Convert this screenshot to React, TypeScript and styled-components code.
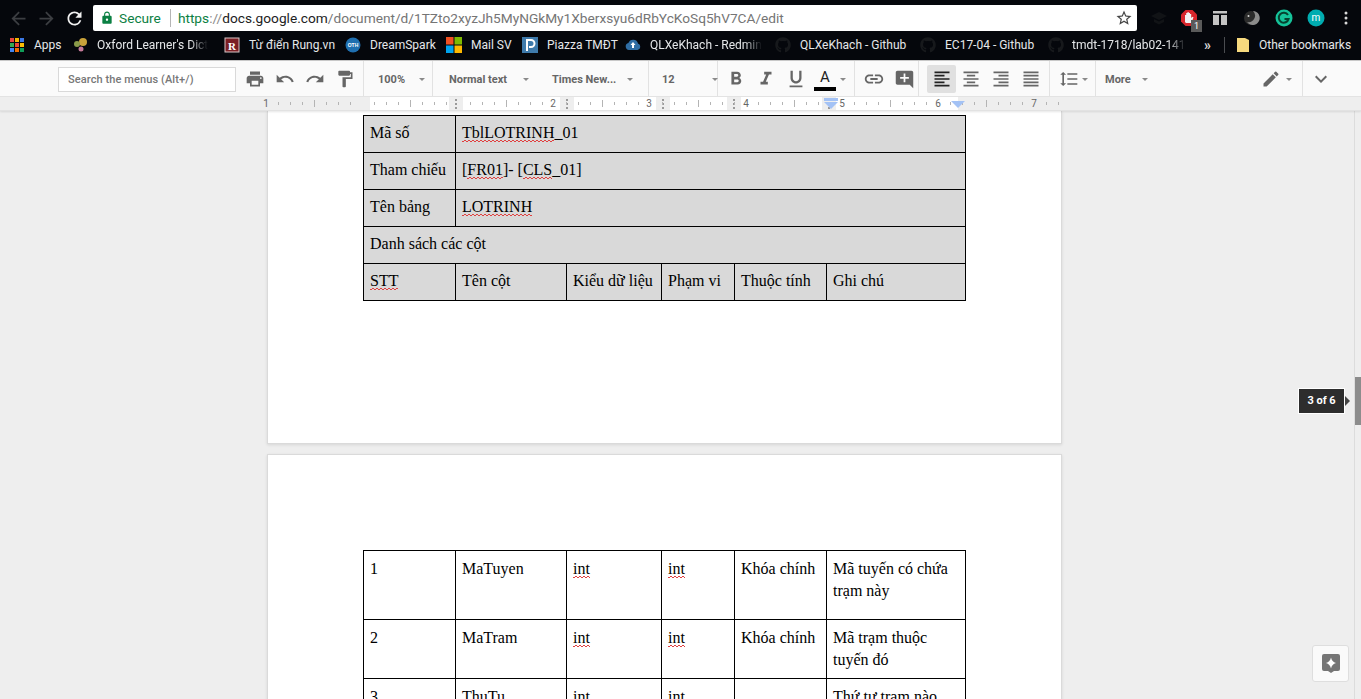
import React from "react";
import styled, { createGlobalStyle } from "styled-components";
import {
  MdAddComment,
  MdArrowBack,
  MdArrowForward,
  MdEdit,
  MdExpandMore,
  MdFormatAlignCenter,
  MdFormatAlignJustify,
  MdFormatAlignLeft,
  MdFormatAlignRight,
  MdFormatBold,
  MdFormatItalic,
  MdFormatLineSpacing,
  MdFormatPaint,
  MdFormatUnderlined,
  MdInsertLink,
  MdLock,
  MdPrint,
  MdRedo,
  MdRefresh,
  MdStarBorder,
  MdUndo,
} from "react-icons/md";
import { FaGithub } from "react-icons/fa";

const GlobalStyle = createGlobalStyle`
  html, body {
    margin: 0;
    padding: 0;
    height: 100%;
    overflow: hidden;
    background: #eeeeee;
  }
  * { box-sizing: border-box; }
`;

const Shell = styled.div`
  width: 1361px;
  height: 699px;
  display: flex;
  flex-direction: column;
  overflow: hidden;
  font-family: Roboto, "Liberation Sans", sans-serif;
`;

/* browser chrome */
const TopBar = styled.div`
  height: 32px;
  flex: none;
  background: #05070c;
  display: flex;
  align-items: flex-start;
  padding: 5px 0 0 4px;
`;

const NavButton = styled.div<{ $dim?: boolean; $w?: number }>`
  width: ${(p) => p.$w ?? 28}px;
  height: 26px;
  flex: none;
  display: flex;
  align-items: center;
  justify-content: center;
  color: ${(p) => (p.$dim ? "#3c3e42" : "#f0f0f0")};
  font-size: 21px;
`;

const AddressBar = styled.div`
  width: 1044px;
  height: 26px;
  flex: none;
  margin-left: 5px;
  background: #ffffff;
  border-radius: 2px;
  display: flex;
  align-items: center;
  padding-left: 7px;
  font-size: 13.7px;
  white-space: nowrap;
`;

const SecureLabel = styled.span`
  color: #0b8043;
  margin-left: 5px;
  padding-right: 9px;
  border-right: 1px solid #b5b5b5;
  line-height: 18px;
  margin-right: 7px;
`;

const UrlPart = styled.span<{ $c: string }>`
  color: ${(p) => p.$c};
`;

const StarSlot = styled.div`
  margin-left: auto;
  margin-right: 4px;
  display: flex;
  color: #444;
  font-size: 18px;
`;

const Extensions = styled.div`
  display: flex;
  align-items: center;
  height: 26px;
  flex: none;
  margin-left: 7px;
`;

const ExtSlot = styled.div<{ $w: number }>`
  width: ${(p) => p.$w}px;
  height: 26px;
  display: flex;
  align-items: center;
  justify-content: center;
  position: relative;
`;

const ExtBadge = styled.span`
  position: absolute;
  left: 17px;
  top: 15px;
  width: 11px;
  height: 12px;
  background: #5a5a5a;
  color: #fff;
  font-size: 9px;
  line-height: 12px;
  text-align: center;
`;

const BookmarkBar = styled.div`
  height: 28px;
  flex: none;
  background: #05070c;
  display: flex;
  align-items: center;
  padding: 0 0 2px 10px;
`;

const Bookmark = styled.div<{ $w: number; $gap?: number }>`
  width: ${(p) => p.$w}px;
  flex: none;
  display: flex;
  align-items: center;
  gap: ${(p) => p.$gap ?? 9}px;
  color: #e6e8ea;
  font-size: 12px;
  white-space: nowrap;
  overflow: hidden;
  svg {
    flex: none;
  }
`;

const BookmarkText = styled.span<{ $fade?: boolean }>`
  ${(p) =>
    p.$fade
      ? "-webkit-mask-image: linear-gradient(to right, #000 84%, transparent 100%); mask-image: linear-gradient(to right, #000 84%, transparent 100%);"
      : ""}
`;

const Chevrons = styled.span`
  width: 20px;
  margin-left: 9px;
  color: #d8d8d8;
  font-size: 14px;
  font-weight: 700;
`;

const BarDivider = styled.span`
  width: 1px;
  height: 16px;
  background: #4a4c50;
  margin: 0 11px 0 0;
`;

/* docs toolbar */
const Toolbar = styled.div`
  height: 37px;
  flex: none;
  background: #fafafa;
  border-top: 1px solid #c8c8c8;
  border-bottom: 1px solid #e4e4e4;
  display: flex;
  align-items: stretch;
  padding-left: 58px;
  color: #666666;
`;

const SearchBox = styled.div`
  width: 178px;
  height: 25px;
  flex: none;
  margin-top: 1px;
  border: 1px solid #d9d9d9;
  background: #fff;
  color: #777;
  font-size: 11px;
  font-weight: 500;
  line-height: 24px;
  padding-left: 9px;
  letter-spacing: 0.1px;
  white-space: nowrap;
`;

const Group = styled.div<{ $w: number; $line?: boolean; $pad?: number }>`
  width: ${(p) => p.$w}px;
  flex: none;
  display: flex;
  align-items: center;
  padding: 1px 0 0 ${(p) => p.$pad ?? 0}px;
  border-right: ${(p) => (p.$line === false ? "none" : "1px solid #e2e2e2")};
`;

const IconButton = styled.div<{ $w?: number; $on?: boolean; $size?: number; $c?: string }>`
  width: ${(p) => p.$w ?? 30}px;
  height: 28px;
  flex: none;
  display: flex;
  align-items: center;
  justify-content: center;
  border-radius: 2px;
  font-size: ${(p) => p.$size ?? 20}px;
  color: ${(p) => p.$c ?? "#666666"};
  background: ${(p) => (p.$on ? "#e0e0e0" : "transparent")};
`;

const Label = styled.span<{ $w?: number }>`
  width: ${(p) => (p.$w ? `${p.$w}px` : "auto")};
  flex: none;
  font-size: 11px;
  font-weight: 700;
  color: #666666;
  white-space: nowrap;
`;

const Caret = styled.span<{ $gap?: number; $after?: number }>`
  width: 0;
  height: 0;
  flex: none;
  margin-left: ${(p) => p.$gap ?? 0}px;
  margin-right: ${(p) => p.$after ?? 0}px;
  border-left: 3px solid transparent;
  border-right: 3px solid transparent;
  border-top: 3px solid #8a8a8a;
`;

const Spacer = styled.span<{ $w?: number }>`
  flex: ${(p) => (p.$w ? "none" : "1")};
  width: ${(p) => p.$w ?? 0}px;
`;

const ColorA = styled.div`
  width: 24px;
  height: 24px;
  display: flex;
  flex-direction: column;
  align-items: center;
  color: #222;
  font-size: 15px;
  line-height: 20px;
  font-weight: 400;
`;

const ColorSwatch = styled.span`
  width: 22px;
  height: 4px;
  background: #000;
  flex: none;
`;

/* ruler */
const Ruler = styled.div`
  height: 14px;
  flex: none;
  position: relative;
  display: flex;
  background: #eeeeee;
  border-bottom: 1px solid #e2e2e2;
  box-shadow: 0 1px 2px rgba(0, 0, 0, 0.1);
  z-index: 2;
`;

const RulerSeg = styled.div<{ $w: number; $white?: boolean; $handle?: boolean }>`
  width: ${(p) => p.$w}px;
  flex: none;
  background: ${(p) => (p.$white ? "#ffffff" : "#eeeeee")};
  display: flex;
  align-items: center;
  justify-content: center;
  &::after {
    content: ${(p) => (p.$handle ? '""' : "none")};
    width: 2px;
    height: 10px;
    background: repeating-linear-gradient(to bottom, #9a9a9a 0 2px, transparent 2px 4px);
  }
`;

const RulerTicks = styled.svg`
  position: absolute;
  left: 0;
  top: 0;
`;

const RulerNumber = styled.span<{ $x: number }>`
  position: absolute;
  left: ${(p) => p.$x}px;
  top: 0;
  width: 10px;
  text-align: center;
  font-size: 10px;
  line-height: 14px;
  color: #666;
`;

/* document */
const Workspace = styled.div`
  flex: 1;
  min-height: 0;
  display: flex;
  position: relative;
  background: #eeeeee;
`;

const Pages = styled.div`
  flex: 1;
  min-width: 0;
  overflow: hidden;
  padding-left: 267px;
  display: flex;
  flex-direction: column;
  gap: 10px;
`;

const Page = styled.div<{ $h: number; $top: number }>`
  width: 795px;
  height: ${(p) => p.$h}px;
  flex: none;
  background: #fff;
  padding: ${(p) => p.$top}px 0 0 95px;
  border: 1px solid #dadada;
  border-top: ${(p) => (p.$top < 10 ? "none" : "1px solid #dadada")};
  box-shadow: 0 1px 3px rgba(0, 0, 0, 0.1);
`;

const DocTable = styled.table`
  width: 602px;
  border-collapse: collapse;
  table-layout: fixed;
  font-family: "Liberation Serif", "Times New Roman", serif;
  font-size: 16px;
  line-height: 22px;
  color: #000;
`;

const Cell = styled.td<{ $shade?: boolean; $tall?: number }>`
  border: 1px solid #000;
  padding: ${(p) => (p.$tall ? 7 : 6)}px 6px 6px;
  vertical-align: top;
  height: ${(p) => p.$tall ?? 37}px;
  background: ${(p) => (p.$shade ? "#d9d9d9" : "#ffffff")};
  overflow: hidden;
  white-space: normal;
`;

const Squiggle = styled.span`
  padding-bottom: 1px;
  background-image: linear-gradient(135deg, transparent 35%, #e04040 35% 65%, transparent 65%),
    linear-gradient(45deg, transparent 35%, #e04040 35% 65%, transparent 65%);
  background-size: 4px 2px, 4px 2px;
  background-position: 0 100%, 2px 100%;
  background-repeat: repeat-x;
`;

const Scrollbar = styled.div`
  width: 7px;
  flex: none;
  background: #eeeeee;
  border-left: 1px solid #dcdcdc;
  padding-top: 266px;
`;

const ScrollThumb = styled.div`
  height: 48px;
  background: #8c8c8c;
`;

const PageTip = styled.div`
  position: absolute;
  left: 1298px;
  top: 277px;
  width: 47px;
  height: 26px;
  background: #2d2d2d;
  border: 1px solid #fff;
  color: #fff;
  font-size: 11px;
  font-weight: 700;
  line-height: 24px;
  text-align: center;
  &::after {
    content: "";
    position: absolute;
    left: 46px;
    top: 7px;
    border-top: 5px solid transparent;
    border-bottom: 5px solid transparent;
    border-left: 5px solid #444444;
  }
`;

const ExploreButton = styled.div`
  position: absolute;
  left: 1312px;
  top: 534px;
  width: 37px;
  height: 37px;
  background: #fafafa;
  border: 1px solid #dedede;
  border-radius: 3px;
  display: flex;
  align-items: center;
  justify-content: center;
`;

const rulerSegments = [
  { w: 370 },
  { w: 79, white: true },
  { w: 14, handle: true },
  { w: 97, white: true },
  { w: 14, handle: true },
  { w: 82, white: true },
  { w: 14, handle: true },
  { w: 57, white: true },
  { w: 14, handle: true },
  { w: 81, white: true },
  { w: 14, handle: true },
  { w: 122, white: true },
  { w: 403 },
];

const rulerNumbers = [
  { n: 1, x: 261 },
  { n: 2, x: 548 },
  { n: 3, x: 644 },
  { n: 4, x: 741 },
  { n: 5, x: 837 },
  { n: 6, x: 933 },
  { n: 7, x: 1029 },
];

const AppsIcon = () => {
  const colors = ["#e8453c", "#f4b400", "#3b78e7", "#34a853", "#ea4335", "#fbbc05", "#4285f4", "#ef6c00", "#0f9d58"];
  return (
    <svg width="14" height="14" viewBox="0 0 14 14">
      {colors.map((c, i) => (
        <rect key={i} x={(i % 3) * 5} y={Math.floor(i / 3) * 5} width="4" height="4" fill={c} />
      ))}
    </svg>
  );
};

const OxfordIcon = () => (
  <svg width="16" height="16" viewBox="0 0 16 16">
    <circle cx="10" cy="5" r="4" fill="#c9a23a" />
    <circle cx="4" cy="7" r="3" fill="#8a9a4a" />
    <circle cx="8" cy="12" r="2.5" fill="#c77a9a" />
  </svg>
);

const RungIcon = () => (
  <svg width="16" height="16" viewBox="0 0 16 16">
    <rect x="1" y="1" width="14" height="14" fill="#7b1f24" stroke="#d8c8c8" />
    <text x="8" y="12.500" fontSize="11" fontWeight="700" fill="#fff" textAnchor="middle" fontFamily="Liberation Serif">R</text>
  </svg>
);

const OthIcon = () => (
  <svg width="16" height="16" viewBox="0 0 16 16">
    <circle cx="8" cy="8" r="7.500" fill="#1f6fb0" />
    <text x="8" y="10" fontSize="5" fontWeight="700" fill="#fff" textAnchor="middle" fontFamily="Liberation Sans">OTH</text>
  </svg>
);

const WindowsIcon = () => (
  <svg width="16" height="16" viewBox="0 0 16 16">
    <rect width="7.500" height="7.500" fill="#f25022" />
    <rect x="8.500" width="7.500" height="7.500" fill="#7fba00" />
    <rect y="8.500" width="7.500" height="7.500" fill="#00a4ef" />
    <rect x="8.500" y="8.500" width="7.500" height="7.500" fill="#ffb900" />
  </svg>
);

const PiazzaIcon = () => (
  <svg width="16" height="16" viewBox="0 0 16 16">
    <rect width="16" height="16" fill="#3e7aab" />
    <path d="M5 14V3h4a3.500 3.500 0 0 1 0 7H7" fill="none" stroke="#fff" strokeWidth="2" />
  </svg>
);

const CloudIcon = () => (
  <svg width="16" height="16" viewBox="0 0 16 16">
    <path d="M4 13a3.500 3.500 0 0 1-.6-6.900A5 5 0 0 1 13 6.600 3.300 3.300 0 0 1 12.500 13z" fill="#2f6da4" />
    <path d="M8 5l2.500 3H9v3H7V8H5.500z" fill="#fff" />
  </svg>
);

const GithubIcon = () => <FaGithub size={16} color="#17191c" />;

const FolderIcon = () => (
  <svg width="14" height="16" viewBox="0 0 14 16">
    <path d="M1 1h8l4 2v12H1z" fill="#f6d97e" />
  </svg>
);

const CapIcon = () => (
  <svg width="18" height="16" viewBox="0 0 18 16">
    <path d="M9 2L1 6l8 4 8-4zM4 9v3l5 2.500 5-2.500V9l-5 2.500z" fill="#111316" />
  </svg>
);

const StopIcon = () => (
  <svg width="18" height="18" viewBox="0 0 18 18">
    <path d="M5.500 1h7L17 5.500v7L12.500 17h-7L1 12.500v-7z" fill="#d8262c" />
    <path d="M5 13V6h1.200V4H7.500V3h1.200v1H10v1h1.200v4l1.300-1.300 1 .6L11.500 14H6z" fill="#f2f2f2" />
  </svg>
);

const ReaderIcon = () => (
  <svg width="16" height="16" viewBox="0 0 16 16">
    <rect x="1" y="1" width="14" height="2.500" fill="#c4c4c4" />
    <rect x="1" y="5" width="6" height="10" fill="#c4c4c4" />
    <rect x="9" y="5" width="6" height="10" fill="#c4c4c4" />
  </svg>
);

const MoonIcon = () => (
  <svg width="18" height="18" viewBox="0 0 18 18">
    <circle cx="8" cy="9" r="7" fill="#2c2c2c" />
    <path d="M10 2a7 7 0 1 1-6 11 6.500 6.500 0 0 0 6-11z" fill="#8c8c8c" />
    <circle cx="5.500" cy="7" r="1" fill="#d8d8d8" />
  </svg>
);

const GrammarlyIcon = () => (
  <svg width="18" height="18" viewBox="0 0 18 18">
    <circle cx="9" cy="9" r="8.500" fill="#15c39a" />
    <path d="M13 6a5 5 0 1 0 .6 4H9.500" fill="none" stroke="#06402f" strokeWidth="2" />
  </svg>
);

const AvatarIcon = () => (
  <svg width="18" height="18" viewBox="0 0 18 18">
    <circle cx="9" cy="9" r="8.500" fill="#00acb0" />
    <text x="9" y="12" fontSize="10" fill="#fff" textAnchor="middle" fontFamily="Roboto">m</text>
  </svg>
);

const MenuDots = () => (
  <svg width="4" height="14" viewBox="0 0 4 14">
    <circle cx="2" cy="2" r="1.500" fill="#d8d8d8" />
    <circle cx="2" cy="7" r="1.500" fill="#d8d8d8" />
    <circle cx="2" cy="12" r="1.500" fill="#d8d8d8" />
  </svg>
);

const ExploreIcon = () => (
  <svg width="18" height="19" viewBox="0 0 18 19">
    <path d="M2 0h14a2 2 0 0 1 2 2v13a2 2 0 0 1-2 2h-4l-3 2-3-2H2a2 2 0 0 1-2-2V2a2 2 0 0 1 2-2z" fill="#757575" />
    <path d="M9 3.500c.6 3 2.300 4.700 5 5.500-2.700.8-4.400 2.500-5 5.500-.6-3-2.300-4.700-5-5.500 2.700-.8 4.400-2.500 5-5.500z" fill="#fff" />
  </svg>
);

const ticks = () => {
  const out: React.ReactNode[] = [];
  for (let x = 278; x < 1062; x += 12) {
    const step = Math.round((x - 278) / 12) % 8;
    if (step === 7) continue;
    const tall = step === 3;
    out.push(<rect key={x} x={x} y={tall ? 3 : 5} width="1" height={tall ? 7 : 3} fill="#b4b4b4" />);
  }
  return out;
};

const Columns = () => (
  <colgroup>
    <col width="92" />
    <col width="111" />
    <col width="95" />
    <col width="73" />
    <col width="92" />
    <col width="139" />
  </colgroup>
);

export default function App() {
  return (
    <Shell>
      <GlobalStyle />
      <TopBar>
        <NavButton $dim><MdArrowBack /></NavButton>
        <NavButton $dim><MdArrowForward /></NavButton>
        <NavButton><MdRefresh /></NavButton>
        <AddressBar>
          <MdLock size={14} color="#0b8043" />
          <SecureLabel>Secure</SecureLabel>
          <UrlPart $c="#0b8043">https</UrlPart>
          <UrlPart $c="#8a8a8a">://</UrlPart>
          <UrlPart $c="#222222">docs.google.com</UrlPart>
          <UrlPart $c="#757575">/document/d/1TZto2xyzJh5MyNGkMy1Xberxsyu6dRbYcKoSq5hV7CA/edit</UrlPart>
          <StarSlot><MdStarBorder /></StarSlot>
        </AddressBar>
        <Extensions>
          <ExtSlot $w={30}><CapIcon /></ExtSlot>
          <ExtSlot $w={30}><StopIcon /><ExtBadge>1</ExtBadge></ExtSlot>
          <ExtSlot $w={32}><ReaderIcon /></ExtSlot>
          <ExtSlot $w={31}><MoonIcon /></ExtSlot>
          <ExtSlot $w={33}><GrammarlyIcon /></ExtSlot>
          <ExtSlot $w={31}><AvatarIcon /></ExtSlot>
          <ExtSlot $w={30}><MenuDots /></ExtSlot>
        </Extensions>
      </TopBar>

      <BookmarkBar>
        <Bookmark $w={63} $gap={10}><AppsIcon /><BookmarkText>Apps</BookmarkText></Bookmark>
        <Bookmark $w={151} $gap={8}><OxfordIcon /><BookmarkText $fade>Oxford Learner's Dict</BookmarkText></Bookmark>
        <Bookmark $w={121}><RungIcon /><BookmarkText>Từ điển Rung.vn</BookmarkText></Bookmark>
        <Bookmark $w={101}><OthIcon /><BookmarkText>DreamSpark</BookmarkText></Bookmark>
        <Bookmark $w={76}><WindowsIcon /><BookmarkText>Mail SV</BookmarkText></Bookmark>
        <Bookmark $w={103}><PiazzaIcon /><BookmarkText>Piazza TMĐT</BookmarkText></Bookmark>
        <Bookmark $w={150}><CloudIcon /><BookmarkText $fade>QLXeKhach - Redmin</BookmarkText></Bookmark>
        <Bookmark $w={145}><GithubIcon /><BookmarkText>QLXeKhach - Github</BookmarkText></Bookmark>
        <Bookmark $w={128}><GithubIcon /><BookmarkText>EC17-04 - Github</BookmarkText></Bookmark>
        <Bookmark $w={147} $gap={8}><GithubIcon /><BookmarkText $fade>tmdt-1718/lab02-141</BookmarkText></Bookmark>
        <Chevrons>»</Chevrons>
        <BarDivider />
        <Bookmark $w={120}><FolderIcon /><BookmarkText>Other bookmarks</BookmarkText></Bookmark>
      </BookmarkBar>

      <Toolbar>
        <Group $w={306}>
          <SearchBox>Search the menus (Alt+/)</SearchBox>
          <IconButton $w={38}><MdPrint /></IconButton>
          <IconButton $w={22}><MdUndo /></IconButton>
          <IconButton $w={38}><MdRedo /></IconButton>
          <IconButton $w={22}><MdFormatPaint /></IconButton>
        </Group>
        <Group $w={69} $pad={14}>
          <Label $w={41}>100%</Label>
          <Caret />
        </Group>
        <Group $w={216} $pad={16}>
          <Label $w={74}>Normal text</Label>
          <Caret />
          <Label $w={23}>&nbsp;</Label>
          <Label $w={75}>Times New...</Label>
          <Caret />
        </Group>
        <Group $w={69} $pad={13}>
          <Label $w={50}>12</Label>
          <Caret />
        </Group>
        <Group $w={137} $pad={3}>
          <IconButton $size={22}><MdFormatBold /></IconButton>
          <IconButton $size={22}><MdFormatItalic /></IconButton>
          <IconButton $size={22}><MdFormatUnderlined /></IconButton>
          <IconButton $w={28}><ColorA>A<ColorSwatch /></ColorA></IconButton>
          <Caret $gap={1} />
        </Group>
        <Group $w={64} $pad={4}>
          <IconButton $size={22}><MdInsertLink /></IconButton>
          <IconButton $size={21}><MdAddComment /></IconButton>
        </Group>
        <Group $w={131} $pad={8}>
          <IconButton $w={29} $on $c="#222222"><MdFormatAlignLeft /></IconButton>
          <IconButton><MdFormatAlignCenter /></IconButton>
          <IconButton><MdFormatAlignRight /></IconButton>
          <IconButton><MdFormatAlignJustify /></IconButton>
        </Group>
        <Group $w={46} $pad={6}>
          <IconButton $w={26}><MdFormatLineSpacing /></IconButton>
          <Caret />
        </Group>
        <Group $w={207} $pad={9}>
          <Label $w={37}>More</Label>
          <Caret />
          <Spacer />
          <IconButton $w={24}><MdEdit /></IconButton>
          <Caret $gap={3} $after={10} />
        </Group>
        <Group $w={40} $line={false}>
          <IconButton $w={36} $size={24}><MdExpandMore /></IconButton>
        </Group>
      </Toolbar>

      <Ruler>
        {rulerSegments.map((s, i) => (
          <RulerSeg key={i} $w={s.w} $white={s.white} $handle={s.handle} />
        ))}
        <RulerTicks width="1361" height="14">
          {ticks()}
          <rect x="824" y="1" width="14" height="3" fill="#a3c2f5" />
          <path d="M824 5h14l-7 7z" fill="#a3c2f5" />
          <path d="M951 4h14l-7 7z" fill="#a3c2f5" />
        </RulerTicks>
        {rulerNumbers.map((r) => (
          <RulerNumber key={r.n} $x={r.x}>{r.n}</RulerNumber>
        ))}
      </Ruler>

      <Workspace>
        <Pages>
          <Page $h={333} $top={4}>
            <DocTable>
              <Columns />
              <tbody>
                <tr>
                  <Cell $shade>Mã số</Cell>
                  <Cell $shade colSpan={5}><Squiggle>TblLOTRINH</Squiggle>_01</Cell>
                </tr>
                <tr>
                  <Cell $shade>Tham chiếu</Cell>
                  <Cell $shade colSpan={5}>[<Squiggle>FR01</Squiggle>]- [<Squiggle>CLS</Squiggle>_01]</Cell>
                </tr>
                <tr>
                  <Cell $shade>Tên bảng</Cell>
                  <Cell $shade colSpan={5}><Squiggle>LOTRINH</Squiggle></Cell>
                </tr>
                <tr>
                  <Cell $shade colSpan={6}>Danh sách các cột</Cell>
                </tr>
                <tr>
                  <Cell $shade><Squiggle>STT</Squiggle></Cell>
                  <Cell $shade>Tên cột</Cell>
                  <Cell $shade>Kiểu dữ liệu</Cell>
                  <Cell $shade>Phạm vi</Cell>
                  <Cell $shade>Thuộc tính</Cell>
                  <Cell $shade>Ghi chú</Cell>
                </tr>
              </tbody>
            </DocTable>
          </Page>
          <Page $h={400} $top={95}>
            <DocTable>
              <Columns />
              <tbody>
                <tr>
                  <Cell $tall={69}>1</Cell>
                  <Cell $tall={69}>MaTuyen</Cell>
                  <Cell $tall={69}><Squiggle>int</Squiggle></Cell>
                  <Cell $tall={69}><Squiggle>int</Squiggle></Cell>
                  <Cell $tall={69}>Khóa chính</Cell>
                  <Cell $tall={69}>Mã tuyến có chứa trạm này</Cell>
                </tr>
                <tr>
                  <Cell $tall={59}>2</Cell>
                  <Cell $tall={59}>MaTram</Cell>
                  <Cell $tall={59}><Squiggle>int</Squiggle></Cell>
                  <Cell $tall={59}><Squiggle>int</Squiggle></Cell>
                  <Cell $tall={59}>Khóa chính</Cell>
                  <Cell $tall={59}>Mã trạm thuộc tuyến đó</Cell>
                </tr>
                <tr>
                  <Cell $tall={69}>3</Cell>
                  <Cell $tall={69}>ThuTu</Cell>
                  <Cell $tall={69}><Squiggle>int</Squiggle></Cell>
                  <Cell $tall={69}><Squiggle>int</Squiggle></Cell>
                  <Cell $tall={69}></Cell>
                  <Cell $tall={69}>Thứ tự trạm nào trong tuyến</Cell>
                </tr>
              </tbody>
            </DocTable>
          </Page>
        </Pages>
        <Scrollbar><ScrollThumb /></Scrollbar>
        <PageTip>3 of 6</PageTip>
        <ExploreButton><ExploreIcon /></ExploreButton>
      </Workspace>
    </Shell>
  );
}
